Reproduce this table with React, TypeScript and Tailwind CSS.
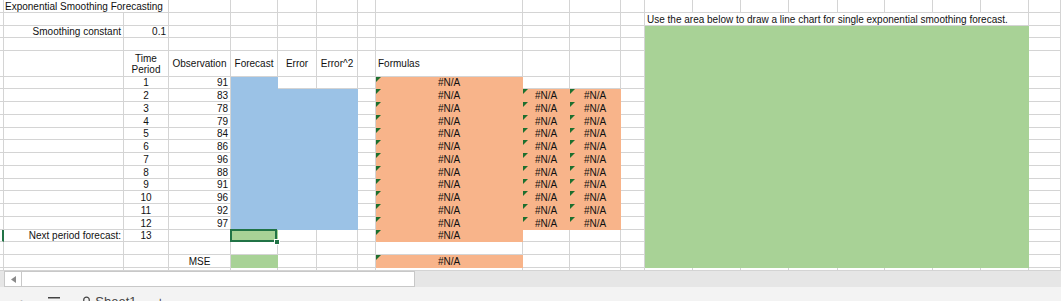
import React from 'react';

// Column widths / row heights measured from the sheet grid
const GRID_COLS =
  'grid-cols-[4px_120px_45px_62px_47px_39px_41px_18px_147px_47px_51px_24px_48px_48px_48px_49px_47px_48px_48px_48px_1fr]';
const GRID_ROWS =
  'grid-rows-[13px_13px_12px_13px_26px_12px_13px_13px_13px_12px_13px_13px_13px_12px_13px_13px_13px_12px_13px_13px_3px]';

const LINE = 'bg-white border-[#d4d4d4]';
const BLUE = 'bg-[#9bc2e6] border-[#9bc2e6]';
const ORANGE = 'bg-[#f8b48a] border-[#f8b48a]';
const GREEN = 'bg-[#a8d296] border-[#a8d296]';

const observations = [91, 83, 78, 79, 84, 86, 96, 88, 91, 96, 92, 97];

type CellDef = {
  text?: string;
  align?: 'left' | 'center' | 'right';
  fill?: string;
  flag?: boolean;
  extra?: string;
  selected?: boolean;
  skip?: boolean;
};

// r: 1..21 sheet rows, c: 1 = row header, 2 = A ... 20 = S, 21 = T
function getCell(r: number, c: number): CellDef {
  if (r === 1 && c === 3) return { skip: true };
  if (r === 2 && c >= 14 && c <= 20) return { skip: true };
  if (r >= 3 && r <= 20 && c >= 13 && c <= 20) return { skip: true };

  if (c === 1) {
    if (r === 18) return { extra: 'border-r-2 border-r-[#217346]' };
    return {};
  }

  if (r === 1 && c === 2) return { text: 'Exponential Smoothing Forecasting', align: 'left', extra: 'col-span-2 pl-px' };
  if (r === 2 && c === 13)
    return {
      text: 'Use the area below to draw a line chart for single exponential smoothing forecast.',
      align: 'left',
      extra: 'col-span-8 pl-[2px]',
    };
  if (r === 3 && c === 2) return { text: 'Smoothing constant', align: 'right' };
  if (r === 3 && c === 3) return { text: '0.1', align: 'right' };

  if (r === 5) {
    if (c === 3) return { text: 'Time\nPeriod', align: 'center' };
    if (c === 4) return { text: 'Observation', align: 'center' };
    if (c === 5) return { text: 'Forecast', align: 'center' };
    if (c === 6) return { text: 'Error', align: 'center' };
    if (c === 7) return { text: 'Error^2', align: 'center' };
    if (c === 9) return { text: 'Formulas', align: 'left', extra: 'pl-[2px]' };
    return {};
  }

  // data rows: 6..17 hold periods 1..12
  if (r >= 6 && r <= 17) {
    const i = r - 6;
    if (c === 3) return { text: String(i + 1), align: 'center' };
    if (c === 4) return { text: String(observations[i]), align: 'right' };
    if (c === 5) return { fill: BLUE };
    if ((c === 6 || c === 7) && r >= 7) return { fill: BLUE };
    if (c === 9) return { fill: ORANGE, flag: true, text: '#N/A', align: 'center' };
    if ((c === 10 || c === 11) && r >= 7) return { fill: ORANGE, flag: true, text: '#N/A', align: 'center' };
    return {};
  }

  if (r === 18) {
    if (c === 2) return { text: 'Next period forecast:', align: 'right' };
    if (c === 3) return { text: '13', align: 'center' };
    if (c === 5) return { fill: GREEN, selected: true };
    if (c === 9) return { fill: ORANGE, flag: true, text: '#N/A', align: 'center' };
    return {};
  }

  if (r === 20) {
    if (c === 4) return { text: 'MSE', align: 'center' };
    if (c === 5) return { fill: GREEN };
    if (c === 9) return { fill: ORANGE, flag: true, text: '#N/A', align: 'center' };
    return {};
  }

  return {};
}

function Flag() {
  return (
    <svg className="absolute left-0 top-0" width="5" height="5" viewBox="0 0 5 5">
      <polygon points="0,0 5,0 0,5" fill="#1d6f2e" />
    </svg>
  );
}

function Cell({ def }: { def: CellDef }) {
  const align =
    def.align === 'right'
      ? 'justify-end text-right pr-[2px]'
      : def.align === 'center'
      ? 'justify-center text-center'
      : 'justify-start';
  return (
    <div
      className={`relative flex items-center whitespace-pre border-r border-b leading-[11px] ${def.fill ?? LINE} ${align} ${
        def.extra ?? ''
      }`}
    >
      {def.flag && <Flag />}
      {def.text}
      {def.selected && (
        <>
          <div className="absolute -left-px -top-px right-0 -bottom-px z-10 border-2 border-[#217346]" />
          <div className="absolute -right-[3px] -bottom-[4px] z-20 h-[6px] w-[6px] border border-white bg-[#217346]" />
        </>
      )}
    </div>
  );
}

export default function App() {
  const rows = Array.from({ length: 21 }, (_, i) => i + 1);
  const cols = Array.from({ length: 21 }, (_, i) => i + 1);

  return (
    <div className="h-[301px] w-[1061px] overflow-hidden bg-white font-['Liberation_Sans',Arial,sans-serif] text-[10px] text-[#111]">
      <div className={`grid ${GRID_COLS} ${GRID_ROWS}`}>
        {/* chart placeholder area L3:S20 */}
        <div className="col-[13/span_8] row-[3/span_18] border-r border-b border-[#a8d296] bg-[#a8d296]" />
        {rows.map((r) =>
          cols.map((c) => {
            const def = getCell(r, c);
            if (def.skip) return null;
            return <Cell key={`${r}-${c}`} def={def} />;
          })
        )}
      </div>

      {/* horizontal scroll strip */}
      <div className="flex h-[16px] bg-[#e6e6e6]">
        <div className="ml-[4px] flex h-full w-[411px] border border-[#c8c8c8] bg-white">
          <div className="flex w-[17px] items-center justify-center border-r border-[#c8c8c8]">
            <svg width="5" height="7" viewBox="0 0 5 7">
              <polygon points="5,0 5,7 0,3.5" fill="#8a8a8a" />
            </svg>
          </div>
        </div>
      </div>

      {/* sheet tab bar, mostly cut off */}
      <div className="relative flex h-[14px] items-start bg-[#f3f3f3] pt-[8px] text-[13px] leading-none text-[#444]">
        <span className="ml-[20px] text-[#bbb]">›</span>
        <svg className="ml-[24px] mt-[2px]" width="12" height="10" viewBox="0 0 12 10">
          <rect x="0" y="0" width="12" height="1.5" fill="#444" />
          <rect x="0" y="4" width="12" height="1.5" fill="#444" />
          <rect x="0" y="8" width="12" height="1.5" fill="#444" />
        </svg>
        <svg className="ml-[23px] mt-[1px]" width="7" height="10" viewBox="0 0 7 10">
          <circle cx="3.5" cy="4" r="2.8" fill="none" stroke="#444" strokeWidth="1.2" />
        </svg>
        <span className="ml-[5px]">Sheet1</span>
        <span className="ml-[20px]">+</span>
      </div>
    </div>
  );
}
